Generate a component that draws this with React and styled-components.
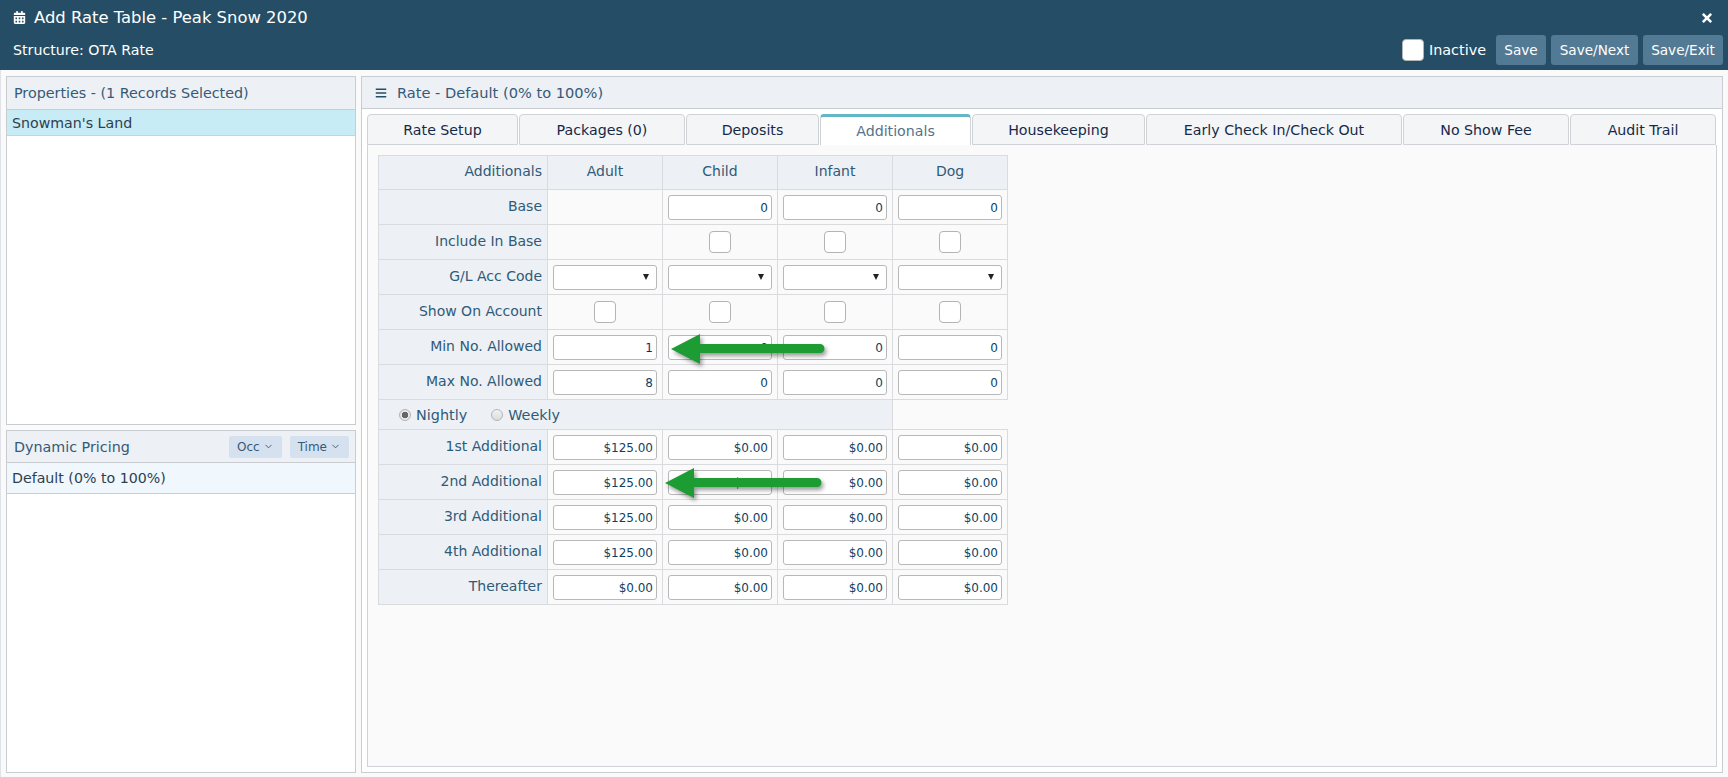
import React from 'react';
import styled, { createGlobalStyle } from 'styled-components';
import { FaCalendarAlt, FaBars, FaTimes } from 'react-icons/fa';
import { LuChevronDown } from 'react-icons/lu';

const Global = createGlobalStyle`
  html, body { margin: 0; padding: 0; height: 100%; overflow: hidden; }
  body { font-family: "DejaVu Sans", Verdana, sans-serif; font-size: 14px; background: #fafafa; }
  * { box-sizing: border-box; }
`;

const Page = styled.div`
  height: 777px;
  display: flex;
  flex-direction: column;
`;

const Header = styled.header`
  height: 70px;
  flex: none;
  background: #254e66;
  color: #fff;
  padding: 0 5px 0 13px;
  display: flex;
  flex-direction: column;
`;

const TitleRow = styled.div`
  height: 35px;
  display: flex;
  align-items: center;
  justify-content: space-between;
  padding-right: 9px;
`;

const Title = styled.h1`
  margin: 0;
  font-size: 16.4px;
  font-weight: 400;
  display: flex;
  align-items: center;
  gap: 8px;
  svg { font-size: 13px; }
`;

const CloseIcon = styled(FaTimes)`
  font-size: 14px;
`;

const ActionRow = styled.div`
  display: flex;
  align-items: center;
  justify-content: space-between;
  height: 30px;
`;

const Structure = styled.span`
  font-size: 14.2px;
`;

const Actions = styled.div`
  display: flex;
  align-items: center;
  gap: 5px;
`;

const InactiveLabel = styled.label`
  display: flex;
  align-items: center;
  gap: 5px;
  margin-right: 5px;
  font-size: 14.4px;
`;

const Check = styled.input.attrs({ type: 'checkbox' })`
  appearance: none;
  display: block;
  margin: 0 auto;
  width: 22px;
  height: 22px;
  background: #fff;
  border: 1px solid #b4b4b4;
  border-radius: 4px;
`;

const ActionButton = styled.button`
  height: 30px;
  width: ${p => p.$w}px;
  padding: 0;
  border: 0;
  border-radius: 3px;
  background: #527a94;
  color: #fff;
  font: inherit;
  font-size: 13.6px;
`;

const Main = styled.main`
  flex: 1;
  min-height: 0;
  display: grid;
  grid-template-columns: 350px 1fr;
  gap: 5px;
  padding: 6px 5px 4px 5px;
  border-left: 1px solid #dfe2e6;
`;

const Side = styled.div`
  display: flex;
  flex-direction: column;
  gap: 5px;
  min-height: 0;
`;

const Panel = styled.section`
  border: 1px solid #c9cdd2;
  background: #fff;
  display: flex;
  flex-direction: column;
  flex: ${p => (p.$fill ? '1' : 'none')};
  height: ${p => (p.$h ? `${p.$h}px` : 'auto')};
  min-height: 0;
`;

const PanelHead = styled.div`
  height: ${p => p.$h || 33}px;
  flex: none;
  background: #edf0f5;
  border-bottom: 1px solid #c9cdd2;
  color: #355a75;
  display: flex;
  align-items: center;
  justify-content: space-between;
  padding: 0 6px 0 7px;
  font-size: 14.3px;
`;

const ListItem = styled.div`
  flex: none;
  height: ${p => p.$h}px;
  background: ${p => p.$bg};
  border-bottom: 1px solid ${p => p.$line};
  color: #2e3f4f;
  padding: 0 5px;
  display: flex;
  align-items: center;
  font-size: 14.2px;
`;

const SmallButtons = styled.div`
  display: flex;
  gap: 8px;
`;

const SmallButton = styled.button`
  height: 22px;
  padding: 0 8px;
  border: 0;
  border-radius: 2px;
  background: #d6e1f0;
  color: #355a75;
  font: inherit;
  font-size: 12px;
  display: flex;
  align-items: center;
  gap: 3px;
`;

const RateTitle = styled.span`
  display: flex;
  align-items: center;
  gap: 10px;
  padding-left: 6px;
  font-size: 14.6px;
  svg { font-size: 12px; color: #254e66; }
`;

const RateBody = styled.div`
  flex: 1;
  min-height: 0;
  background: #fff;
  padding: 5px;
  display: flex;
  flex-direction: column;
`;

const TabBar = styled.div`
  display: flex;
  gap: 1px;
  height: 31px;
  flex: none;
`;

const Tab = styled.div`
  width: ${p => p.$w}px;
  flex: none;
  display: flex;
  align-items: center;
  justify-content: center;
  border: 1px solid #cfd2d6;
  border-top: ${p => (p.$active ? '3px solid #62b6c6' : '1px solid #cfd2d6')};
  border-bottom: ${p => (p.$active ? '0' : '1px solid #cfd2d6')};
  border-radius: 4px 4px 0 0;
  background: ${p => (p.$active ? '#fff' : '#f4f5f7')};
  color: ${p => (p.$active ? '#567389' : '#142a4a')};
  font-size: 14.2px;
`;

const TabContent = styled.div`
  flex: 1;
  min-height: 0;
  background: #fafafa;
  border: 1px solid #cfd2d6;
  border-top: 0;
  padding: 10px;
`;

const TableWrap = styled.div`
  position: relative;
  width: 630px;
`;

const Grid = styled.table`
  border-collapse: collapse;
  table-layout: fixed;
  width: 630px;
`;

const Cell = styled.td`
  width: 115px;
  height: ${p => p.$h || 35}px;
  padding: 0 5px;
  border: 1px solid #d9dbde;
  text-align: center;
  color: #2f5b78;
  font-size: 14px;
  background: ${p => (p.$shade ? '#edf0f5' : 'transparent')};
`;

const LabelCell = styled(Cell)`
  width: 169px;
  text-align: right;
  background: #edf0f5;
  padding-bottom: 3px;
`;

const ColHead = styled(Cell)`
  background: #edf0f5;
  padding-bottom: 3px;
`;

const BlankCell = styled.td`
  border: 0;
  border-bottom: 1px solid #d9dbde;
`;

const NumberInput = styled.input`
  display: block;
  width: 104px;
  height: 25px;
  padding: 1px 3px 0 3px;
  background: #fff;
  border: 1px solid #b8b8b8;
  border-radius: 3px;
  color: ${p => p.$ink || '#0f3f63'};
  font: inherit;
  font-size: 12px;
  text-align: right;
`;

const SelectBox = styled.div`
  position: relative;
  width: 104px;
  height: 25px;

  &::after {
    content: '';
    position: absolute;
    right: 8px;
    top: 9px;
    border-left: 3px solid transparent;
    border-right: 3px solid transparent;
    border-top: 6px solid #222;
    pointer-events: none;
  }
`;

const CodeSelect = styled.select`
  appearance: none;
  display: block;
  width: 100%;
  height: 100%;
  background: #fff;
  border: 1px solid #b8b8b8;
  border-radius: 3px;
  font: inherit;
  font-size: 12px;
`;

const RadioRow = styled.div`
  display: flex;
  align-items: center;
  gap: 24px;
  padding-left: 15px;
  font-size: 14.4px;
`;

const RadioLabel = styled.label`
  display: flex;
  align-items: center;
  gap: 5px;
`;

const RadioDot = styled.span`
  width: 12px;
  height: 12px;
  border-radius: 50%;
  border: 1px solid #b5b5b5;
  background: ${p => (p.$on ? 'radial-gradient(circle, #666 0 3px, #e6e6e6 3.5px)' : 'linear-gradient(#f2f2f2, #dcdcdc)')};
`;

const ArrowMark = styled.svg`
  position: absolute;
  left: ${p => p.$left}px;
  top: ${p => p.$top}px;
  overflow: visible;
  filter: drop-shadow(2px 3px 2px rgba(0, 0, 0, 0.4));
`;

const tabs = [
  ['Rate Setup', 151],
  ['Packages (0)', 166],
  ['Deposits', 133],
  ['Additionals', 151],
  ['Housekeeping', 173],
  ['Early Check In/Check Out', 256],
  ['No Show Fee', 166],
  ['Audit Trail', 146],
];

const money = ['1st Additional', '2nd Additional', '3rd Additional', '4th Additional'];

const Arrow = ({ left, top, length }) => (
  <ArrowMark $left={left} $top={top} width={length} height="31" viewBox={`0 0 ${length} 31`}>
    <path
      d={`M0 15 L29 0 L29 10 H${length - 5} a4.5 4.5 0 0 1 0 9 H29 L29 30 Z`}
      fill="#1c9c33"
    />
  </ArrowMark>
);

const GlSelect = () => (
  <SelectBox>
    <CodeSelect><option /></CodeSelect>
  </SelectBox>
);

const App = () => (
  <Page>
    <Global />
    <Header>
      <TitleRow>
        <Title>
          <FaCalendarAlt />
          Add Rate Table - Peak Snow 2020
        </Title>
        <CloseIcon />
      </TitleRow>
      <ActionRow>
        <Structure>Structure: OTA Rate</Structure>
        <Actions>
          <InactiveLabel>
            <Check readOnly />
            Inactive
          </InactiveLabel>
          <ActionButton $w={50}>Save</ActionButton>
          <ActionButton $w={87}>Save/Next</ActionButton>
          <ActionButton $w={80}>Save/Exit</ActionButton>
        </Actions>
      </ActionRow>
    </Header>

    <Main>
      <Side>
        <Panel $h={349}>
          <PanelHead>Properties - (1 Records Selected)</PanelHead>
          <ListItem $h={26} $bg="#c8ecf5" $line="#b4dbe5">Snowman's Land</ListItem>
        </Panel>
        <Panel $fill>
          <PanelHead $h={32}>
            Dynamic Pricing
            <SmallButtons>
              <SmallButton>Occ <LuChevronDown size={11} /></SmallButton>
              <SmallButton>Time <LuChevronDown size={11} /></SmallButton>
            </SmallButtons>
          </PanelHead>
          <ListItem $h={31} $bg="#f0f7fd" $line="#c9cdd2">Default (0% to 100%)</ListItem>
        </Panel>
      </Side>

      <Panel $fill>
        <PanelHead $h={32}>
          <RateTitle>
            <FaBars />
            Rate - Default (0% to 100%)
          </RateTitle>
        </PanelHead>
        <RateBody>
          <TabBar>
            {tabs.map(([name, w]) => (
              <Tab key={name} $w={w} $active={name === 'Additionals'}>{name}</Tab>
            ))}
          </TabBar>
          <TabContent>
            <TableWrap>
              <Grid>
                <tbody>
                  <tr>
                    <LabelCell $h={34}>Additionals</LabelCell>
                    <ColHead $h={34}>Adult</ColHead>
                    <ColHead $h={34}>Child</ColHead>
                    <ColHead $h={34}>Infant</ColHead>
                    <ColHead $h={34}>Dog</ColHead>
                  </tr>
                  <tr>
                    <LabelCell>Base</LabelCell>
                    <Cell />
                    {[0, 1, 2].map(i => <Cell key={i}><NumberInput readOnly value="0" /></Cell>)}
                  </tr>
                  <tr>
                    <LabelCell>Include In Base</LabelCell>
                    <Cell />
                    {[0, 1, 2].map(i => <Cell key={i}><Check readOnly /></Cell>)}
                  </tr>
                  <tr>
                    <LabelCell>G/L Acc Code</LabelCell>
                    {[0, 1, 2, 3].map(i => <Cell key={i}><GlSelect /></Cell>)}
                  </tr>
                  <tr>
                    <LabelCell>Show On Account</LabelCell>
                    {[0, 1, 2, 3].map(i => <Cell key={i}><Check readOnly /></Cell>)}
                  </tr>
                  <tr>
                    <LabelCell>Min No. Allowed</LabelCell>
                    <Cell><NumberInput readOnly value="1" $ink="#2a1a6e" /></Cell>
                    {[0, 1, 2].map(i => <Cell key={i}><NumberInput readOnly value="0" /></Cell>)}
                  </tr>
                  <tr>
                    <LabelCell>Max No. Allowed</LabelCell>
                    <Cell><NumberInput readOnly value="8" /></Cell>
                    {[0, 1, 2].map(i => <Cell key={i}><NumberInput readOnly value="0" /></Cell>)}
                  </tr>
                  <tr>
                    <Cell colSpan={4} $h={30} $shade>
                      <RadioRow>
                        <RadioLabel><RadioDot $on />Nightly</RadioLabel>
                        <RadioLabel><RadioDot />Weekly</RadioLabel>
                      </RadioRow>
                    </Cell>
                    <BlankCell />
                  </tr>
                  {money.map(label => (
                    <tr key={label}>
                      <LabelCell>{label}</LabelCell>
                      <Cell><NumberInput readOnly value="$125.00" /></Cell>
                      {[0, 1, 2].map(i => <Cell key={i}><NumberInput readOnly value="$0.00" /></Cell>)}
                    </tr>
                  ))}
                  <tr>
                    <LabelCell>Thereafter</LabelCell>
                    {[0, 1, 2, 3].map(i => <Cell key={i}><NumberInput readOnly value="$0.00" /></Cell>)}
                  </tr>
                </tbody>
              </Grid>
              <Arrow left={293} top={179} length={154} />
              <Arrow left={287} top={313} length={157} />
            </TableWrap>
          </TabContent>
        </RateBody>
      </Panel>
    </Main>
  </Page>
);

export default App;
